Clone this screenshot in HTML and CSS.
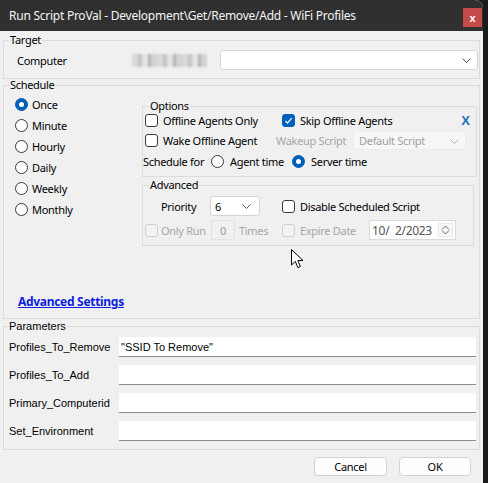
FILE: index.html
```html
<!DOCTYPE html>
<html>
<head>
<meta charset="utf-8">
<link rel="stylesheet" href="styles.css">
</head>
<body>
<div class="win">
  <div class="titlebar">
    <span class="title">Run Script ProVal - Development\Get/Remove/Add - WiFi Profiles</span>
    <span class="close">x</span>
  </div>
  <div class="content">
    <fieldset class="grp target">
      <legend>Target</legend>
      <div class="trow">
        <span class="tlabel">Computer</span>
        <span class="blur"></span>
        <span class="combo wide"><svg class="chev" width="9" height="5" viewBox="0 0 9 5"><polyline points="0.5,0.5 4.5,4.5 8.5,0.5" fill="none" stroke="#555" stroke-width="1"/></svg></span>
      </div>
    </fieldset>

    <fieldset class="grp schedule">
      <legend>Schedule</legend>
      <div class="sgrid">
        <div class="freq">
          <label class="ritem"><span class="rb on"></span>Once</label>
          <label class="ritem"><span class="rb"></span>Minute</label>
          <label class="ritem"><span class="rb"></span>Hourly</label>
          <label class="ritem"><span class="rb"></span>Daily</label>
          <label class="ritem"><span class="rb"></span>Weekly</label>
          <label class="ritem"><span class="rb"></span>Monthly</label>
        </div>
        <div class="rightcol">
          <fieldset class="grp options">
            <legend>Options</legend>
            <div class="orow r1">
              <span class="oc1"><span class="cb"></span>Offline Agents Only</span>
              <span class="oc2"><span class="cb on"><svg width="11" height="11" viewBox="0 0 11 11"><polyline points="2.3,5.8 4.5,8 8.7,3.2" fill="none" stroke="#fff" stroke-width="1.2"/></svg></span>Skip Offline Agents</span>
              <span class="xmark">X</span>
            </div>
            <div class="orow r2">
              <span class="oc1b"><span class="cb"></span>Wake Offline Agent</span>
              <span class="wlabel">Wakeup Script</span>
              <span class="combo dis wk">Default Script<svg class="chev" width="9" height="5" viewBox="0 0 9 5"><polyline points="0.5,0.5 4.5,4.5 8.5,0.5" fill="none" stroke="#b5b5b5" stroke-width="1"/></svg></span>
            </div>
            <div class="orow r3">
              <span class="sflabel">Schedule for</span>
              <span class="agent"><span class="rb"></span>Agent time</span>
              <span class="server"><span class="rb on"></span>Server time</span>
            </div>
          </fieldset>
          <fieldset class="grp advanced">
            <legend>Advanced</legend>
            <div class="arow">
              <span class="plabel">Priority</span>
              <span class="combo prio">6<svg class="chev" width="9" height="5" viewBox="0 0 9 5"><polyline points="0.5,0.5 4.5,4.5 8.5,0.5" fill="none" stroke="#555" stroke-width="1"/></svg></span>
              <span class="dss"><span class="cb"></span>Disable Scheduled Script</span>
            </div>
            <div class="arow second">
              <span class="ac1"><span class="cb dis"></span>Only Run</span>
              <span class="numbox">0</span>
              <span class="times">Times</span>
              <span class="ac2"><span class="cb dis"></span>Expire Date</span>
              <span class="datebox">10/&nbsp;&nbsp;2/2023<span class="spin"><svg width="9" height="5" viewBox="0 0 9 5"><polyline points="1,4.5 4.5,1 8,4.5" fill="none" stroke="#666" stroke-width="1"/></svg><svg width="9" height="5" viewBox="0 0 9 5"><polyline points="1,0.5 4.5,4 8,0.5" fill="none" stroke="#666" stroke-width="1"/></svg></span></span>
            </div>
          </fieldset>
        </div>
      </div>
      <a class="advlink" href="#">Advanced Settings</a>
    </fieldset>

    <fieldset class="grp params">
      <legend>Parameters</legend>
      <div class="prow"><span class="plbl">Profiles_To_Remove</span><span class="pin">"SSID To Remove"</span></div>
      <div class="prow"><span class="plbl">Profiles_To_Add</span><span class="pin"></span></div>
      <div class="prow"><span class="plbl">Primary_Computerid</span><span class="pin"></span></div>
      <div class="prow"><span class="plbl">Set_Environment</span><span class="pin"></span></div>
    </fieldset>

    <div class="buttons">
      <span class="btn cancel">Cancel</span>
      <span class="btn ok">OK</span>
    </div>
  </div>
  <svg class="cursor" width="13" height="20" viewBox="0 0 13 20"><path d="M0.5 0.5 L0.5 16 L4.3 12.4 L6.9 18.6 L9.4 17.5 L6.9 11.5 L12 11.5 Z" fill="#fff" stroke="#000" stroke-width="1" stroke-linejoin="round"/></svg>
</div>
</body>
</html>
```
FILE: styles.css
```css
* { box-sizing: border-box; }
html, body { margin: 0; padding: 0; }
body {
  width: 488px; height: 483px; overflow: hidden;
  background: #1a1a1a;
  font-family: "Noto Sans", sans-serif;
  font-size: 11px;
  letter-spacing: -0.3px;
  color: #000;
}
.win {
  position: relative;
  width: 483px; height: 483px;
  background: #f0f0f0;
  border-top-right-radius: 8px;
  overflow: hidden;
}
.titlebar {
  height: 31px; background: #303030;
  display: flex; align-items: center;
  padding-left: 9px; color: #f4f4f4;
}
.title { flex: 1; font-size: 12px; letter-spacing: -0.25px; }
.close {
  width: 19px; height: 19px; background: #c44a4a; color: #fff;
  font-family: "Liberation Sans", sans-serif; font-weight: bold; font-size: 11px;
  display: flex; align-items: center; justify-content: center;
  margin-right: 1px; align-self: flex-start; margin-top: 8px; letter-spacing: 0;
}
.content { padding: 3px 3px 0 3px; }
.grp {
  margin: 0; padding: 0; min-width: 0;
  border: 1px solid #dcdcdc;
}
.grp > legend {
  padding: 0 1px; margin-left: 5px;
  font-size: 11px; line-height: 12px;
}
/* target */
.trow { display: flex; align-items: center; height: 20px; margin: 4px 0 8px; }
.tlabel { width: 128px; padding-left: 13px; }
.blur {
  width: 75px; height: 13px; margin-right: 13px;
  background: repeating-linear-gradient(90deg, #d9d9d9 0 6px, #c4c4c4 6px 10px, #e4e4e4 10px 16px, #b4b4b4 16px 19px, #d3d3d3 19px 25px);
  filter: blur(1px);
}
.combo {
  position: relative;
  display: flex; align-items: center;
  background: #fff; border: 1px solid #d9d9d9; border-radius: 3px;
  height: 20px; padding-left: 3px;
}
.combo .chev { position: absolute; right: 6px; top: 7px; }
.combo.wide { width: 258px; height: 20px; }
/* schedule */
.sgrid { display: flex; }
.freq { width: 138px; padding-top: 3px; padding-left: 11px; }
.ritem { display: flex; align-items: center; height: 21px; gap: 4px; }
.rb {
  width: 13px; height: 13px; border-radius: 50%;
  border: 1px solid #3a3a3a; background: #fff; flex: none;
  display: inline-block; position: relative;
}
.rb.on { background: #005fb8; border-color: #005fb8; }
.rb.on::after {
  content: ""; position: absolute; left: 3px; top: 3px;
  width: 5px; height: 5px; border-radius: 50%; background: #fff;
}
.cb {
  width: 13px; height: 13px; border-radius: 3px;
  border: 1px solid #3a3a3a; background: #fff; flex: none;
  display: inline-flex; align-items: center; justify-content: center;
}
.cb.on { background: #005fb8; border-color: #005fb8; }
.cb.dis { border-color: #cfcfcf; background: #f3f3f3; }
.rightcol { width: 335px; margin-top: 9px; }
.options > legend, .advanced > legend { margin-left: 6px; }
.options { padding: 0 0 5px; }
.orow { display: flex; align-items: center; height: 20px; }
.orow.r1 { height: 16px; }
.orow.r2 { margin-top: 2px; }
.orow.r3 { margin-top: 1px; }
.oc1 { width: 139px; padding-left: 2px; display: flex; align-items: center; gap: 5px; }
.oc2 { display: flex; align-items: center; gap: 5px; }
.xmark {
  margin-left: auto; margin-right: 6px;
  font-family: "Liberation Sans", sans-serif; font-weight: bold; font-size: 13px;
  color: #1f6fc0; letter-spacing: 0;
}
.oc1b { width: 133px; padding-left: 2px; display: flex; align-items: center; gap: 5px; }
.wlabel { width: 77px; color: #a6a6a6; }
.combo.dis { background: #f7f7f7; border-color: #ececec; color: #a0a0a0; }
.combo.wk { width: 113px; height: 19px; padding-left: 5px; }
.sflabel { width: 68px; }
.agent { width: 81px; display: flex; align-items: center; gap: 6px; }
.server { display: flex; align-items: center; gap: 6px; }
.advanced { width: 332px; margin-top: 2px; padding: 5px 0 5px; }
.arow { display: flex; align-items: center; height: 20px; }
.arow.second { margin-top: 4px; }
.plabel { width: 67px; padding-left: 18px; }
.combo.prio { width: 50px; border-color: #d5d5d5; padding-left: 4px; }
.combo.prio .chev { right: 8px; }
.dss { margin-left: 22px; display: flex; align-items: center; gap: 5px; }
.ac1 { width: 68px; padding-left: 2px; display: flex; align-items: center; gap: 3px; color: #a6a6a6; }
.numbox {
  width: 24px; height: 20px; border: 1px solid #e2e2e2; background: #f0f0f0;
  color: #9a9a9a; display: flex; align-items: center; justify-content: center;
}
.times { width: 47px; padding-left: 4px; color: #a6a6a6; }
.ac2 { width: 87px; display: flex; align-items: center; gap: 5px; color: #a6a6a6; }
.datebox {
  position: relative;
  width: 87px; height: 20px; background: #fff; border: 1px solid #d9d9d9;
  display: flex; align-items: center; padding-left: 2px; color: #555; font-size: 12px;
}
.spin {
  position: absolute; right: 2px; top: 2px; width: 15px; height: 14px;
  display: flex; flex-direction: column; align-items: center; justify-content: space-between;
  border: 1px solid #e8e8e8; background: #f7f7f7; padding: 1px 0;
}
.advlink {
  display: block; width: max-content;
  margin: 48px 0 8px 14px;
  font-size: 12px; line-height: 16px; font-weight: bold;
  color: #0b1fe0; text-decoration: underline;
}
/* params */
.params > legend {
  margin-left: 4px; font-family: "Liberation Sans", sans-serif; font-size: 11px; letter-spacing: 0;
}
.params { margin-top: 1px; padding: 5px 0 8px; font-family: "Liberation Sans", sans-serif; letter-spacing: 0; }
.prow { display: flex; align-items: center; height: 20px; }
.prow + .prow { margin-top: 8px; }
.plbl { width: 115px; padding-left: 5px; font-size: 11px; }
.pin {
  width: 357px; height: 20px; background: #fff;
  border-bottom: 1px solid #8c8c8c;
  display: flex; align-items: center; padding-left: 2px; font-size: 11px;
}
.buttons { display: flex; justify-content: flex-end; gap: 12px; margin-top: 7px; padding-right: 9px; }
.btn {
  height: 19px; background: #fdfdfd; border: 1px solid #d3d3d3; border-radius: 4px;
  display: flex; align-items: center; justify-content: center; font-size: 11px;
}
.btn.cancel { width: 73px; }
.btn.ok { width: 72px; }
.cursor { position: absolute; left: 291px; top: 249px; }
```
